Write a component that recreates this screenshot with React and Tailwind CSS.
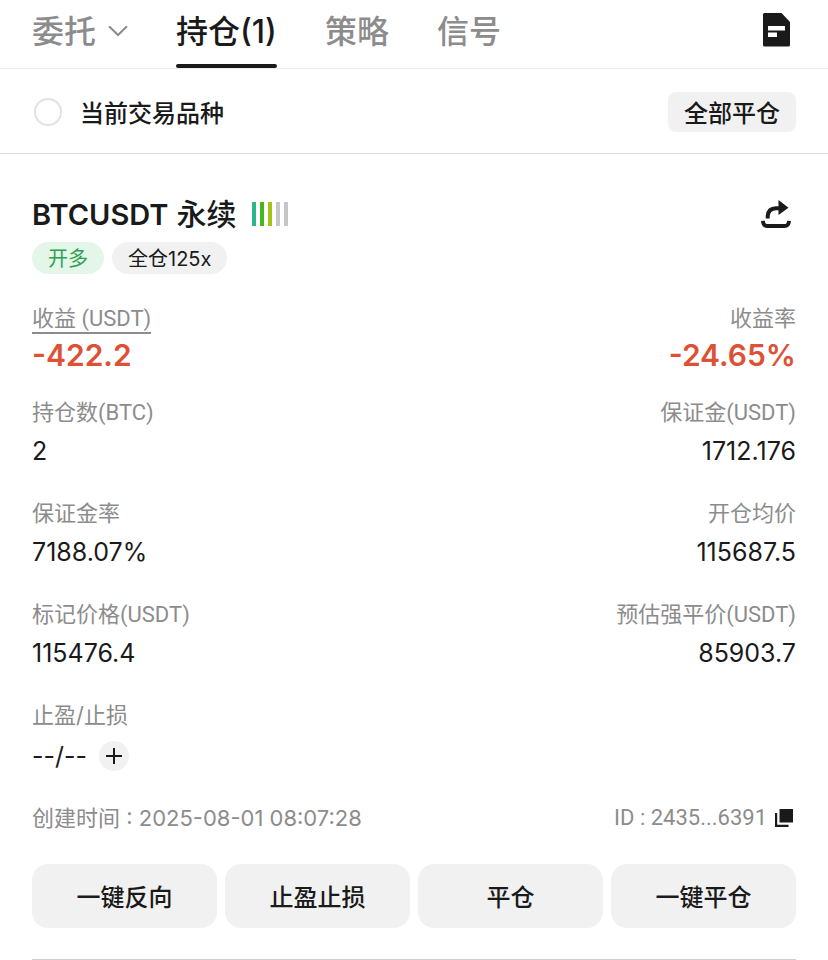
import { useState } from "react";

const FONT = "font-['Inter','Noto_Sans_CJK_SC',sans-serif]";
const LABEL_FONT = "font-['Roboto','Noto_Sans_CJK_SC',sans-serif]";

const tabs = [
  { id: "orders", label: "委托", menu: true },
  { id: "positions", label: "持仓(1)" },
  { id: "strategy", label: "策略" },
  { id: "signal", label: "信号" },
];

const stats = [
  [
    { label: "持仓数(BTC)", value: "2" },
    { label: "保证金(USDT)", value: "1712.176" },
  ],
  [
    { label: "保证金率", value: "7188.07%" },
    { label: "开仓均价", value: "115687.5" },
  ],
  [
    { label: "标记价格(USDT)", value: "115476.4" },
    { label: "预估强平价(USDT)", value: "85903.7" },
  ],
];

const actions = ["一键反向", "止盈止损", "平仓", "一键平仓"];

function ChevronIcon() {
  return (
    <svg className="h-3 w-5" viewBox="0 0 20 12" fill="none" stroke="#8c8c8c" strokeWidth="2">
      <path d="M1 .2 10 9l9-8.8" />
    </svg>
  );
}

function HistoryIcon() {
  return (
    <svg className="h-[34px] w-7" viewBox="0 0 28 34">
      <path d="M1.500 0h17l8.500 9v23a1.500 1.500 0 0 1-1.500 1.500h-24A1.500 1.500 0 0 1 0 32V1.500A1.500 1.500 0 0 1 1.500 0z" fill="#1a1a1a" />
      <path d="M5 13h17v4.500H5zM5 19.500h9v4.500H5z" fill="#fff" />
    </svg>
  );
}

function ShareIcon() {
  return (
    <svg className="h-7 w-[30px]" viewBox="0 0 30 28" fill="none" stroke="#1a1a1a">
      <path d="M6.700 18.500v-2.500Q7.200 8.500 15 8.200h3" strokeWidth="4" />
      <path d="M17.500 0 27.500 7.700 17.500 15z" fill="#1a1a1a" stroke="none" />
      <path d="M1.900 20.800Q2.300 26 6.500 26h17Q27.700 26 28.100 20.800" strokeWidth="3.800" />
    </svg>
  );
}

function CopyIcon() {
  return (
    <svg className="size-[18px]" viewBox="0 0 18 18" fill="#1a1a1a">
      <path d="M4.500 0H18v13.500H4.500z" />
      <path d="M0 4h2.200v11.800H13.500V18H0z" />
    </svg>
  );
}

function LevelBars() {
  return (
    <div className="flex gap-1">
      <span className="h-6 w-1 bg-[#2bb78c]" />
      <span className="h-6 w-1 bg-[#43b81f]" />
      <span className="h-6 w-1 bg-[#a5c313]" />
      <span className="h-6 w-1 bg-[#c6c6c6]" />
      <span className="h-6 w-1 bg-[#c6c6c6]" />
    </div>
  );
}

function Stat({ label, value }) {
  return (
    <div className="last:text-right">
      <dt className={`${LABEL_FONT} pt-0.5 text-[22px] leading-[36px] text-[#8c8c8c]`}>{label}</dt>
      <dd className="text-[25px] leading-[40px]">{value}</dd>
    </div>
  );
}

export default function App() {
  const [active, setActive] = useState("positions");
  const [onlyCurrent, setOnlyCurrent] = useState(false);

  return (
    <main className={`${FONT} bg-white text-[#1a1a1a]`}>
      {/* Tabs */}
      <header className="flex items-start justify-between border-b border-[#ececec] px-8">
        <nav className="flex gap-12">
          {tabs.map((tab) => (
            <button
              key={tab.id}
              type="button"
              onClick={() => setActive(tab.id)}
              className="flex h-[68px] flex-col justify-between text-[32px] font-medium"
            >
              <span
                className={`flex items-center gap-3 leading-[64px] ${
                  active === tab.id ? "" : "text-[#8c8c8c]"
                }`}
              >
                {tab.label}
                {tab.menu && <ChevronIcon />}
              </span>
              <span className={`h-1 w-full rounded-full ${active === tab.id ? "bg-[#1a1a1a]" : ""}`} />
            </button>
          ))}
        </nav>
        <button type="button" aria-label="历史" className="flex h-[60px] items-center px-[5px]">
          <HistoryIcon />
        </button>
      </header>

      {/* Filter */}
      <div className="flex h-[85px] items-center justify-between border-b border-[#d9d9d9] px-8 pt-0.5">
        <label className="flex items-center gap-4 text-[24px] font-medium">
          <input
            type="checkbox"
            checked={onlyCurrent}
            onChange={(e) => setOnlyCurrent(e.target.checked)}
            className="mx-0.5 size-7 appearance-none rounded-full border-2 border-[#e2e2e2] checked:border-8 checked:border-[#1a1a1a]"
          />
          <span className="pt-1">当前交易品种</span>
        </label>
        <button type="button" className="h-10 rounded-lg bg-[#f1f1f1] px-4 pt-1 text-[24px] font-medium">
          全部平仓
        </button>
      </div>

      {/* Position */}
      <section className="px-8 pt-[39px]">
        <div className="flex items-center justify-between">
          <div className="flex items-center gap-4">
            <h2 className="h-[42px] text-[30px] leading-[42px] font-medium">
              <span className="text-[29px] font-semibold">BTCUSDT</span> 永续
            </h2>
            <LevelBars />
          </div>
          <button type="button" aria-label="分享" className="px-[5px]">
            <ShareIcon />
          </button>
        </div>

        <div className="mt-[7px] flex gap-2 text-[20px] leading-[34px]">
          <span className="h-8 rounded-full bg-[#e3f6e8] px-4 text-[#2fa052]">开多</span>
          <span className="h-8 rounded-full bg-[#f1f1f1] px-4">全仓125x</span>
        </div>

        <dl className="mt-7 flex justify-between">
          <div>
            <dt className={`${LABEL_FONT} flex text-[22px] text-[#8c8c8c]`}>
              <span className="border-b-2 border-[#8c8c8c] pt-1 leading-[26px]">收益 (USDT)</span>
            </dt>
            <dd className="text-[30px] leading-[42px] font-semibold text-[#dd5136]">-422.2</dd>
          </div>
          <div className="text-right">
            <dt className="text-[22px] leading-[32px] text-[#8c8c8c]">收益率</dt>
            <dd className="text-[30px] leading-[42px] font-semibold text-[#dd5136]">-24.65%</dd>
          </div>
        </dl>

        <div className="mt-[17px] flex flex-col gap-[23px]">
          {stats.map(([left, right]) => (
            <dl key={left.label} className="flex justify-between">
              <Stat {...left} />
              <Stat {...right} />
            </dl>
          ))}
          <dl>
            <dt className="text-[22px] leading-[38px] text-[#8c8c8c]">止盈/止损</dt>
            <dd className="flex items-center gap-3 text-[25px] leading-[44px]">
              --/--
              <button
                type="button"
                aria-label="添加止盈止损"
                className="flex size-[30px] items-center justify-center rounded-full bg-[#f1f1f1]"
              >
                <svg className="size-4" viewBox="0 0 16 16" stroke="#1a1a1a" strokeWidth="2">
                  <path d="M8 0v16M0 8h16" />
                </svg>
              </button>
            </dd>
          </dl>
        </div>

        <div className="mt-6 flex justify-between text-[22px] leading-[32px] text-[#8c8c8c]">
          <p>创建时间 : 2025-08-01 08:07:28</p>
          <p className={`${LABEL_FONT} flex items-center gap-2`}>
            ID : 2435...6391
            <button type="button" aria-label="复制" className="pr-[3px]">
              <CopyIcon />
            </button>
          </p>
        </div>

        <div className="mt-[30px] grid grid-cols-4 gap-2 border-b border-[#d0d0d0] pb-[31px]">
          {actions.map((name) => (
            <button key={name} type="button" className="h-16 rounded-2xl bg-[#f1f1f1] pt-1 text-[24px] font-medium">
              {name}
            </button>
          ))}
        </div>
      </section>
    </main>
  );
}
